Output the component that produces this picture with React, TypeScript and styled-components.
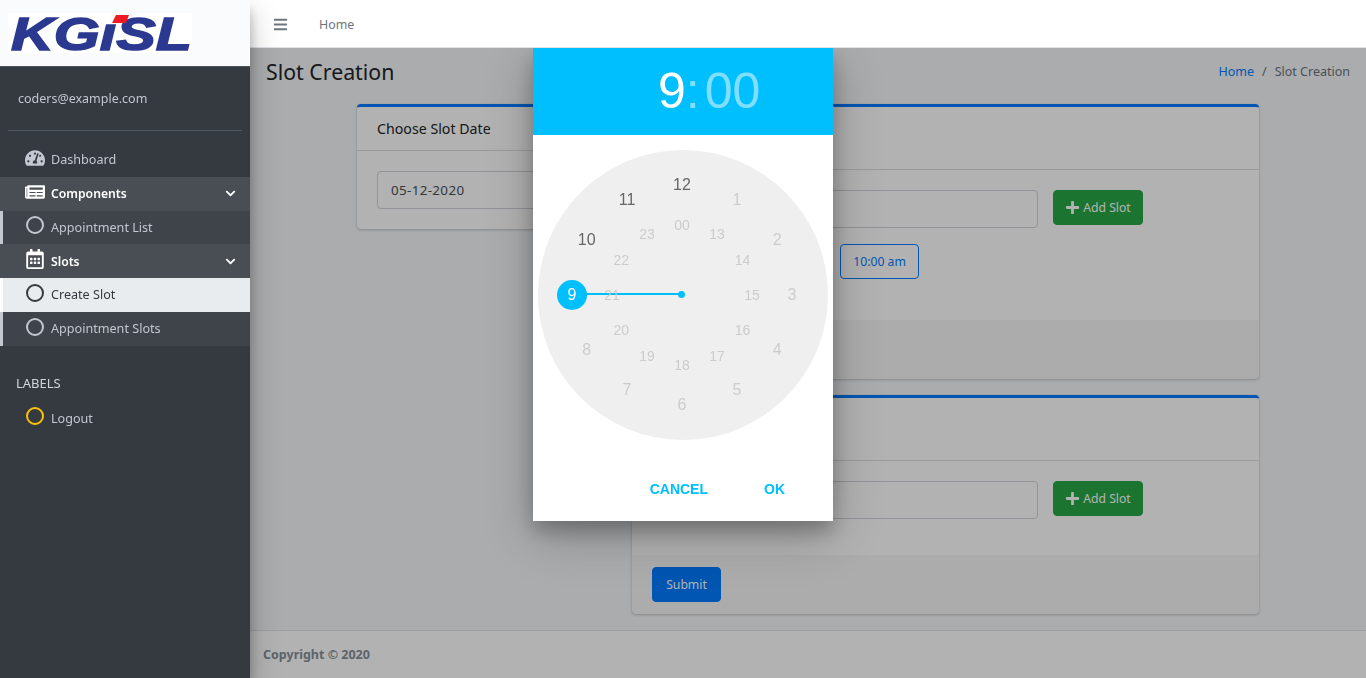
import React from "react";
import styled, { createGlobalStyle } from "styled-components";
import {
  FaBars,
  FaChevronDown,
  FaNewspaper,
  FaPlus,
  FaRegCalendarAlt,
  FaTachometerAlt,
} from "react-icons/fa";

const GlobalStyle = createGlobalStyle`
  html, body {
    margin: 0;
    height: 100%;
    overflow: hidden;
    background: #f4f6f9;
    font-family: "Noto Sans", "Liberation Sans", sans-serif;
  }
  * {
    box-sizing: border-box;
  }
`;

const Root = styled.div`
  display: flex;
  height: 100vh;
`;

const Sidebar = styled.aside`
  position: relative;
  z-index: 3;
  flex: 0 0 250px;
  background: #343a40;
  color: #c2c7d0;
  box-shadow: 0 14px 28px rgba(0, 0, 0, 0.25), 0 10px 10px rgba(0, 0, 0, 0.22);
`;

const Brand = styled.div`
  height: 67px;
  padding: 13px 0 0 8px;
  background: #fafbfc;
  border-bottom: 1px solid #4b545c;
`;

const LogoBox = styled.svg`
  display: block;
  width: 184px;
  height: 40px;
  background: #fff;
  overflow: visible;
`;

const UserPanel = styled.div`
  display: flex;
  align-items: center;
  height: 64px;
  margin: 0 8px;
  padding-left: 10px;
  font-size: 12.5px;
  border-bottom: 1px solid #4f5962;
`;

const Nav = styled.nav`
  margin-top: 12px;
`;

const NavRow = styled.div<{ $kind?: "open" | "sub" | "active" }>`
  display: flex;
  align-items: center;
  height: 33.75px;
  padding-left: ${({ $kind }) => ($kind === "sub" || $kind === "active" ? "21px" : "24px")};
  font-size: ${({ $kind }) => ($kind === "open" ? 12.2 : 12.6)}px;
  font-weight: ${({ $kind }) => ($kind === "open" ? 600 : 400)};
  color: ${({ $kind }) => ($kind === "open" ? "#fff" : $kind === "active" ? "#343a40" : "#c2c7d0")};
  background: ${({ $kind }) =>
    $kind === "open"
      ? "rgba(255,255,255,0.1)"
      : $kind === "sub"
      ? "rgba(255,255,255,0.05)"
      : $kind === "active"
      ? "#e9ecef"
      : "transparent"};
  border-left: ${({ $kind }) =>
    $kind === "sub" ? "3px solid #c2c7d0" : $kind === "active" ? "3px solid #fff" : "none"};
`;

const NavIcon = styled.span`
  display: flex;
  justify-content: center;
  width: 21px;
  margin-right: 6px;
  margin-top: -4px;
  font-size: 20px;
`;

const Ring = styled.span<{ $color?: string }>`
  display: block;
  width: 18px;
  height: 18px;
  margin: 0 0 0 1px;
  border: 2px solid ${({ $color }) => $color || "currentColor"};
  border-radius: 50%;
`;

const Caret = styled(FaChevronDown)`
  margin-left: auto;
  margin-right: 14px;
  font-size: 11px;
`;

const SectionLabel = styled.div`
  margin-top: 29.5px;
  padding-left: 16px;
  height: 16px;
  line-height: 16px;
  font-size: 13px;
  color: #d0d4db;
`;

const LogoutRow = styled(NavRow)`
  margin-top: 10.5px;
  padding-left: 24px;
`;

const Main = styled.div`
  flex: 1;
  display: flex;
  flex-direction: column;
  min-width: 0;
`;

const TopBar = styled.header`
  position: relative;
  z-index: 2;
  display: flex;
  align-items: center;
  flex: 0 0 48px;
  padding: 1px 0 0 23px;
  background: #fff;
  border-bottom: 1px solid #dee2e6;
  color: #6c757d;
`;

const MenuIcon = styled(FaBars)`
  font-size: 15px;
`;

const TopLink = styled.span`
  margin-left: 31px;
  font-size: 12.4px;
`;

const Stage = styled.div`
  position: relative;
  flex: 1;
  display: flex;
  flex-direction: column;
  min-height: 0;
`;

const Content = styled.main`
  flex: 1;
  padding: 0 16px;
  min-height: 0;
`;

const PageHead = styled.div`
  display: flex;
  align-items: center;
  justify-content: space-between;
  height: 56px;
  padding-bottom: 9px;
`;

const PageTitle = styled.h1`
  margin: 0;
  font-size: 21.3px;
  font-weight: 400;
  color: #212529;
`;

const Breadcrumb = styled.div`
  display: flex;
  gap: 8px;
  font-size: 12.5px;
  color: #6c757d;
`;

const Crumb = styled.span`
  color: #007bff;
`;

const Columns = styled.div`
  display: flex;
  align-items: flex-start;
  gap: 15px;
  margin-left: 91px;
`;

const LeftCol = styled.div`
  flex: 0 0 260px;
`;

const RightCol = styled.div`
  flex: 0 0 627px;
  display: flex;
  flex-direction: column;
  gap: 16px;
`;

const Card = styled.section`
  background: #fff;
  border-top: 3px solid #007bff;
  border-radius: 4px;
  box-shadow: 0 0 1px rgba(0, 0, 0, 0.125), 0 1px 3px rgba(0, 0, 0, 0.2);
`;

const CardHead = styled.div<{ $h: number }>`
  display: flex;
  align-items: center;
  height: ${({ $h }) => $h}px;
  padding: 0 20px;
  font-size: 14.2px;
  color: #212529;
  border-bottom: 1px solid rgba(0, 0, 0, 0.125);
`;

const CardBody = styled.div<{ $h: number }>`
  height: ${({ $h }) => $h}px;
  padding: 20px;
`;

const CardFoot = styled.div<{ $h: number }>`
  height: ${({ $h }) => $h}px;
  padding: 12px 20px;
  background: rgba(0, 0, 0, 0.03);
`;

const FieldRow = styled.div`
  display: flex;
  align-items: flex-start;
  gap: 15px;
`;

const Field = styled.div<{ $w: number }>`
  flex: 0 0 ${({ $w }) => $w}px;
  display: flex;
  align-items: center;
  height: 38px;
  padding: 0 13px;
  font-size: 13.4px;
  letter-spacing: 0.35px;
  color: #495057;
  background: #fff;
  border: 1px solid #ced4da;
  border-radius: 4px;
`;

const AddButton = styled.button`
  display: flex;
  align-items: center;
  justify-content: center;
  gap: 3px;
  width: 90px;
  height: 35px;
  padding: 0;
  font: inherit;
  font-size: 12.2px;
  color: #fff;
  background: #28a745;
  border: 1px solid #28a745;
  border-radius: 4px;
`;

const AddIcon = styled(FaPlus)`
  font-size: 15px;
`;

const ChipRow = styled.div`
  display: flex;
  padding-left: 188px;
  margin-top: 16px;
`;

const Chip = styled.div`
  display: flex;
  align-items: center;
  justify-content: center;
  width: 79px;
  height: 35px;
  font-size: 12.2px;
  color: #007bff;
  border: 1px solid #007bff;
  border-radius: 4px;
`;

const SubmitButton = styled.button`
  width: 69px;
  height: 35px;
  padding: 0;
  font: inherit;
  font-size: 12.2px;
  color: #fff;
  background: #007bff;
  border: 1px solid #007bff;
  border-radius: 4px;
`;

const PageFoot = styled.footer`
  display: flex;
  align-items: center;
  flex: 0 0 48px;
  padding-left: 13px;
  font-size: 12.5px;
  font-weight: 700;
  color: #869099;
  background: #fff;
  border-top: 1px solid #dee2e6;
`;

const Overlay = styled.div`
  position: absolute;
  inset: 0;
  background: rgba(0, 0, 0, 0.3);
`;

const Dialog = styled.div`
  position: fixed;
  top: 48px;
  left: 533px;
  z-index: 1;
  display: flex;
  flex-direction: column;
  width: 300px;
  height: 473px;
  background: #fff;
  font-family: "Liberation Sans", Arial, sans-serif;
  box-shadow: 0 14px 45px rgba(0, 0, 0, 0.25), 0 10px 18px rgba(0, 0, 0, 0.22);
`;

const DialogHead = styled.div`
  display: flex;
  align-items: center;
  flex: 0 0 87px;
  padding: 0 0 2px 125px;
  background: #00bfff;
  font-size: 50px;
  color: #fff;
`;

const Faded = styled.span<{ $gap?: number }>`
  margin-left: ${({ $gap }) => $gap || 0}px;
  color: rgba(255, 255, 255, 0.5);
`;

const DialogBody = styled.div`
  flex: 1;
  padding: 15px 5px 0;
`;

const Face = styled.div`
  position: relative;
  width: 290px;
  height: 290px;
  border-radius: 50%;
  background: #efefef;
`;

const Tick = styled.span<{ $tone: "dark" | "off" | "on"; $inner?: boolean }>`
  position: absolute;
  z-index: 2;
  transform: translate(-50%, -50%);
  font-size: ${({ $inner }) => ($inner ? 14 : 16)}px;
  color: ${({ $tone }) => ($tone === "dark" ? "#666" : $tone === "on" ? "#fff" : "#ccc")};
`;

const Hand = styled.div`
  position: absolute;
  left: 34px;
  top: 143px;
  width: 110px;
  height: 2px;
  background: #00bfff;
`;

const HandDot = styled.div`
  position: absolute;
  left: 140px;
  top: 141px;
  width: 7px;
  height: 7px;
  border-radius: 50%;
  background: #00bfff;
`;

const Selected = styled.div`
  position: absolute;
  z-index: 1;
  left: 19px;
  top: 130px;
  width: 30px;
  height: 30px;
  border-radius: 50%;
  background: #00bfff;
`;

const DialogFoot = styled.div`
  display: flex;
  justify-content: flex-end;
  gap: 56px;
  padding: 0 48px 24px 0;
`;

const DialogAction = styled.span`
  font-size: 14px;
  line-height: 16px;
  font-weight: 700;
  color: #00bfff;
`;

// ticks sit on two rings around the middle of the face
const CX = 144;
const CY = 145;
const hours = [12, 1, 2, 3, 4, 5, 6, 7, 8, 9, 10, 11];
const inner = ["00", "13", "14", "15", "16", "17", "18", "19", "20", "21", "22", "23"];

const place = (i: number, r: number) => {
  const a = (i * Math.PI) / 6;
  return { left: CX + r * Math.sin(a), top: CY - r * Math.cos(a) };
};

const App: React.FC = () => {
  return (
    <Root>
      <GlobalStyle />
      <Sidebar>
        <Brand>
          <LogoBox viewBox="0 0 184 40">
            <text
              x="3"
              y="37"
              fontFamily="Liberation Sans"
              fontWeight="700"
              fontStyle="italic"
              fontSize="47"
              fill="#2b3990"
              stroke="#2b3990"
              strokeWidth="1.5"
              textLength="181"
              lengthAdjust="spacingAndGlyphs"
            >
              KGıSL
            </text>
            <polygon points="108,2 121,2 118,10 104,10" fill="#ed1c24" />
          </LogoBox>
        </Brand>
        <UserPanel>coders@example.com</UserPanel>
        <Nav>
          <NavRow>
            <NavIcon>
              <FaTachometerAlt />
            </NavIcon>
            Dashboard
          </NavRow>
          <NavRow $kind="open">
            <NavIcon>
              <FaNewspaper />
            </NavIcon>
            Components
            <Caret />
          </NavRow>
          <NavRow $kind="sub">
            <NavIcon>
              <Ring />
            </NavIcon>
            Appointment List
          </NavRow>
          <NavRow $kind="open">
            <NavIcon>
              <FaRegCalendarAlt />
            </NavIcon>
            Slots
            <Caret />
          </NavRow>
          <NavRow $kind="active">
            <NavIcon>
              <Ring />
            </NavIcon>
            Create Slot
          </NavRow>
          <NavRow $kind="sub">
            <NavIcon>
              <Ring />
            </NavIcon>
            Appointment Slots
          </NavRow>
        </Nav>
        <SectionLabel>LABELS</SectionLabel>
        <LogoutRow>
          <NavIcon>
            <Ring $color="#ffc107" />
          </NavIcon>
          Logout
        </LogoutRow>
      </Sidebar>
      <Main>
        <TopBar>
          <MenuIcon />
          <TopLink>Home</TopLink>
        </TopBar>
        <Stage>
          <Content>
            <PageHead>
              <PageTitle>Slot Creation</PageTitle>
              <Breadcrumb>
                <Crumb>Home</Crumb>
                <span>/</span>
                <span>Slot Creation</span>
              </Breadcrumb>
            </PageHead>
            <Columns>
              <LeftCol>
                <Card>
                  <CardHead $h={44}>Choose Slot Date</CardHead>
                  <CardBody $h={78}>
                    <Field $w={220}>05-12-2020</Field>
                  </CardBody>
                </Card>
              </LeftCol>
              <RightCol>
                <Card>
                  <CardHead $h={63} />
                  <CardBody $h={150}>
                    <FieldRow>
                      <Field $w={386} />
                      <AddButton>
                        <AddIcon />
                        Add Slot
                      </AddButton>
                    </FieldRow>
                    <ChipRow>
                      <Chip>10:00 am</Chip>
                    </ChipRow>
                  </CardBody>
                  <CardFoot $h={59} />
                </Card>
                <Card>
                  <CardHead $h={63} />
                  <CardBody $h={94}>
                    <FieldRow>
                      <Field $w={386} />
                      <AddButton>
                        <AddIcon />
                        Add Slot
                      </AddButton>
                    </FieldRow>
                  </CardBody>
                  <CardFoot $h={59}>
                    <SubmitButton>Submit</SubmitButton>
                  </CardFoot>
                </Card>
              </RightCol>
            </Columns>
          </Content>
          <PageFoot>Copyright © 2020</PageFoot>
          <Overlay />
          <Dialog>
            <DialogHead>
              9<Faded>:</Faded>
              <Faded $gap={5}>00</Faded>
            </DialogHead>
            <DialogBody>
              <Face>
                <Hand />
                <HandDot />
                <Selected />
                {hours.map((h, i) => (
                  <Tick
                    key={h}
                    style={place(i, 110)}
                    $tone={h === 9 ? "on" : h >= 10 ? "dark" : "off"}
                  >
                    {h}
                  </Tick>
                ))}
                {inner.map((h, i) => (
                  <Tick key={h} style={place(i, 70)} $tone="off" $inner>
                    {h}
                  </Tick>
                ))}
              </Face>
            </DialogBody>
            <DialogFoot>
              <DialogAction>CANCEL</DialogAction>
              <DialogAction>OK</DialogAction>
            </DialogFoot>
          </Dialog>
        </Stage>
      </Main>
    </Root>
  );
};

export default App;
